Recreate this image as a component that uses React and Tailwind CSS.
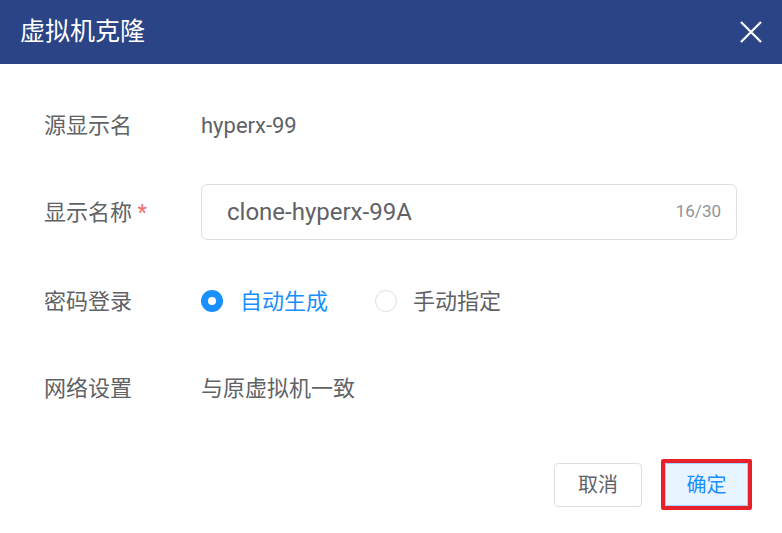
export default function App() {
  const font = { fontFamily: '"Roboto", "Noto Sans CJK SC", sans-serif' };
  return (
    <div className="w-[782px] h-[533px] bg-white flex flex-col" style={font}>
      <div className="h-[64px] bg-[#2b4486] flex items-center justify-between pl-[20px] pr-[19px] shrink-0">
        <span className="text-white text-[25px]">虚拟机克隆</span>
        <svg width="24" height="24" viewBox="0 0 24 24" className="text-white">
          <path d="M2 2 L22 22 M22 2 L2 22" stroke="currentColor" strokeWidth="2.2" fill="none" />
        </svg>
      </div>

      <div className="flex flex-col pl-[44px] pr-[45px] pt-[29px]">
        <div className="flex items-center h-[64px]">
          <span className="w-[157px] text-[22px] text-[#606266]">源显示名</span>
          <span className="text-[22px] text-[#606266]">hyperx-99</span>
        </div>

        <div className="flex items-center mt-[27px]">
          <span className="w-[157px] text-[22px] text-[#606266]">
            显示名称 <span className="text-[#f56c6c]">*</span>
          </span>
          <div className="flex-1 h-[56px] border border-[#dcdfe6] rounded-[6px] flex items-center justify-between pl-[25px] pr-[15px]">
            <span className="text-[24px] text-[#606266]">clone-hyperx-99A</span>
            <span className="text-[17px] text-[#909399]">16/30</span>
          </div>
        </div>

        <div className="flex items-center h-[64px] mt-[29px]">
          <span className="w-[157px] text-[22px] text-[#606266]">密码登录</span>
          <div className="flex items-center">
            <span className="w-[22px] h-[22px] rounded-full bg-[#1890ff] flex items-center justify-center">
              <span className="w-[8px] h-[8px] rounded-full bg-white" />
            </span>
            <span className="ml-[17px] text-[22px] text-[#1890ff]">自动生成</span>
            <span className="ml-[47px] w-[22px] h-[22px] rounded-full border border-[#dcdfe6] bg-white" />
            <span className="ml-[16px] text-[22px] text-[#606266]">手动指定</span>
          </div>
        </div>

        <div className="flex items-center h-[64px] mt-[23px]">
          <span className="w-[157px] text-[22px] text-[#606266]">网络设置</span>
          <span className="text-[22px] text-[#606266]">与原虚拟机一致</span>
        </div>

        <div className="flex items-center justify-end mt-[39px] mr-[-15px]">
          <button className="w-[88px] h-[44px] border border-[#dcdfe6] rounded-[4px] bg-white text-[20px] text-[#606266]">
            取消
          </button>
          <div className="ml-[19px] border-[4px] border-[#e8202a] rounded-[2px]">
            <button className="w-[83px] h-[43px] bg-[#e8f4ff] border border-[#a3d3ff] text-[20px] text-[#1890ff]">
              确定
            </button>
          </div>
        </div>
      </div>
    </div>
  );
}
